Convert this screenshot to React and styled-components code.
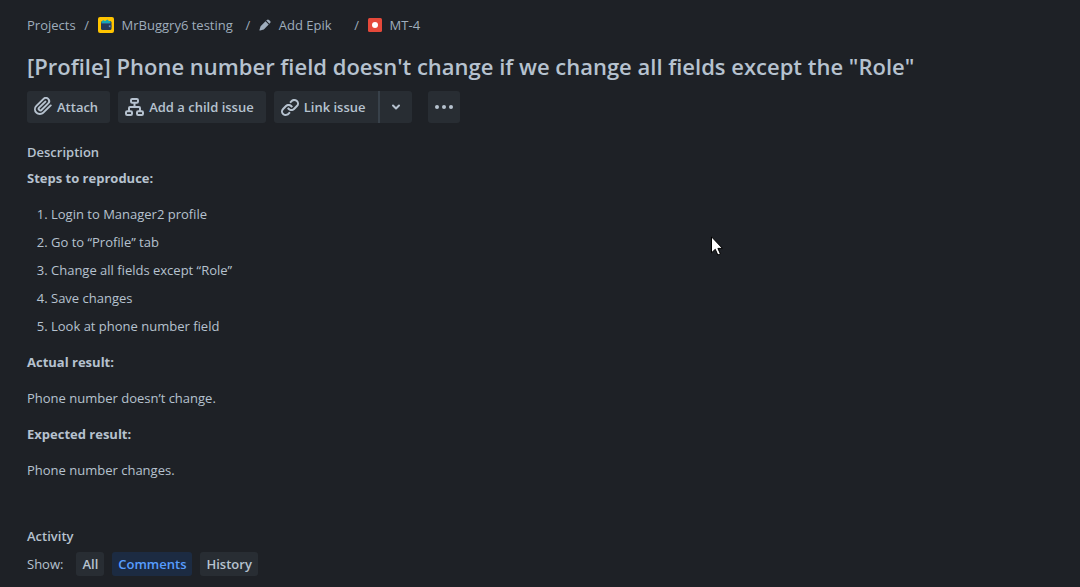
import React, { useState } from "react";
import styled, { createGlobalStyle } from "styled-components";

const GlobalStyle = createGlobalStyle`
  * { box-sizing: border-box; }
  body {
    margin: 0;
    background: #1e2126;
    color: #b6c2cf;
    font-family: "Open Sans", "Noto Sans", sans-serif;
    font-size: 13px;
    line-height: 24px;
  }
`;

const Page = styled.main`
  position: relative;
  padding: 13px 27px 11px;
`;

const Breadcrumbs = styled.ol`
  display: flex;
  align-items: center;
  margin: 0;
  padding: 0;
  list-style: none;
  color: #9fadbc;
`;

const Crumb = styled.li`
  display: flex;
  align-items: center;

  &:not(:first-child)::before {
    content: "/";
    width: 22px;
    margin-left: ${(p) => p.$lead || 0}px;
    text-align: center;
  }
`;

const CrumbLink = styled.a`
  display: flex;
  align-items: center;
  gap: 8px;
  color: inherit;
  text-decoration: none;
`;

const Title = styled.h1`
  margin: 13px 0 9px;
  font-size: 22px;
  font-weight: 600;
  line-height: 32px;
`;

const Toolbar = styled.div`
  display: flex;
  gap: 8px;
`;

const ToolButton = styled.button`
  display: flex;
  align-items: center;
  justify-content: center;
  gap: 5px;
  height: 32px;
  padding: 0 ${(p) => (p.$square ? 0 : 12)}px 0 ${(p) => (p.$square ? 0 : 7)}px;
  min-width: 32px;
  border: 0;
  border-radius: 3px;
  background: #282d33;
  color: #b6c2cf;
  font: inherit;
  font-weight: 600;
  cursor: pointer;
`;

const SplitButton = styled.div`
  display: flex;
  margin-right: 8px;

  & > :first-child { border-radius: 3px 0 0 3px; }
  & > :last-child {
    width: 34px;
    border-left: 2px solid #38414a;
    border-radius: 0 3px 3px 0;
  }
`;

const SectionTitle = styled.h2`
  margin: 0;
  font-size: 13px;
  font-weight: 600;
  line-height: 24px;
`;

const Description = styled.section`
  margin-top: 17px;
`;

const Paragraph = styled.p`
  margin: 12px 0 0;

  ${SectionTitle} + & { margin-top: 2px; }
`;

const Steps = styled.ol`
  display: grid;
  gap: 4px;
  margin: 12px 0 0;
  padding-left: 24px;
`;

const Activity = styled.section`
  margin-top: 42px;
`;

const Filters = styled.div`
  display: flex;
  align-items: center;
  gap: 8px;
  margin-top: 4px;
`;

const FilterLabel = styled.span`
  margin-right: 5px;
`;

const FilterButton = styled.button`
  height: 24px;
  padding: 0 6px;
  border: 0;
  border-radius: 3px;
  background: ${(p) => (p.$active ? "#1c2b42" : "#282d33")};
  color: ${(p) => (p.$active ? "#579dff" : "#b6c2cf")};
  font: inherit;
  font-weight: 600;
  cursor: pointer;
`;

const Pointer = styled.svg`
  position: absolute;
  left: 711px;
  top: 236px;
  pointer-events: none;
`;

const ProjectAvatar = () => (
  <svg width="16" height="16" viewBox="0 0 16 16" aria-hidden="true">
    <rect width="16" height="16" rx="2" fill="#ffc400" />
    <rect x="3" y="4" width="10.5" height="9" rx="1.5" fill="#253858" />
    <path d="M3.5 5 5 3l2 1 2.5-1.5L11 4l1.500.3V6h-9z" fill="#14a8b8" />
    <path d="M3.500 6.500h9" stroke="#2f5c86" />
    <rect x="10.5" y="8" width="3" height="2.5" rx="1" fill="#344f7d" />
    <circle cx="11.7" cy="9.2" r=".6" fill="#8fb7df" />
  </svg>
);

const PencilIcon = () => (
  <svg width="12" height="12" viewBox="0 0 12 12" fill="currentColor" aria-hidden="true">
    <path d="M7.900.9a1.500 1.500 0 0 1 2.100 0l1.100 1.100a1.500 1.500 0 0 1 0 2.100l-.7.700-3.200-3.200zM6.500 2.300l3.200 3.200-4.900 4.900-3.600 1.100a.5.5 0 0 1-.7-.7l1.100-3.600z" />
  </svg>
);

const BugIcon = () => (
  <svg width="14" height="14" viewBox="0 0 14 14" aria-hidden="true">
    <rect width="14" height="14" rx="1.5" fill="#e5493a" />
    <circle cx="7" cy="7" r="3" fill="#fff" />
  </svg>
);

const AttachIcon = () => (
  <svg width="18" height="20" viewBox="3 3 18 20" fill="currentColor" aria-hidden="true">
    <path d="M11.643 17.965c-1.530 1.495-4.016 1.496-5.542.004a3.773 3.773 0 0 1 .002-5.412l7.147-6.985a2.316 2.316 0 0 1 3.233-.003c.893.873.895 2.282.004 3.153l-6.703 6.550a.653.653 0 0 1-.914-.008.620.620 0 0 1 0-.902l6.229-6.087a.941.941 0 0 0 0-1.353.995.995 0 0 0-1.384 0l-6.230 6.087a2.502 2.502 0 0 0 0 3.607 2.643 2.643 0 0 0 3.683.009l6.703-6.551a4.147 4.147 0 0 0-.004-5.858 4.306 4.306 0 0 0-6.001.003l-7.148 6.985a5.655 5.655 0 0 0-.002 8.119c2.291 2.239 6.002 2.238 8.295-.003l7.420-7.252a.941.941 0 0 0 0-1.353.995.995 0 0 0-1.384 0l-7.404 7.250z" />
  </svg>
);

const ChildIcon = () => (
  <svg width="19" height="18" viewBox="0 0 19 18" fill="none" stroke="currentColor" strokeWidth="2" aria-hidden="true">
    <rect x="6" y="1" width="7" height="3.8" rx="1.2" />
    <rect x="1" y="13.2" width="6" height="3.8" rx="1.2" />
    <rect x="12" y="13.2" width="6" height="3.8" rx="1.2" />
    <path d="M9.5 5v4M4 13v-3a1 1 0 0 1 1-1h9a1 1 0 0 1 1 1v3" />
  </svg>
);

const LinkIcon = () => (
  <svg width="18" height="19" viewBox="3 3 18 19" fill="currentColor" aria-hidden="true">
    <path d="M12.856 5.457l-.937.920a1.002 1.002 0 0 0 0 1.437 1.047 1.047 0 0 0 1.463 0l.984-.966c.967-.950 2.542-1.135 3.602-.288a2.540 2.540 0 0 1 .203 3.810l-2.903 2.852a2.646 2.646 0 0 1-3.696 0l-1.110-1.090L9 13.570l1.108 1.089c1.822 1.788 4.802 1.788 6.622 0l2.905-2.852a4.558 4.558 0 0 0-.357-6.820c-1.893-1.517-4.695-1.226-6.422.470" />
    <path d="M11.144 19.543l.937-.920a1.002 1.002 0 0 0 0-1.437 1.047 1.047 0 0 0-1.462 0l-.985.966c-.967.950-2.542 1.135-3.602.288a2.540 2.540 0 0 1-.203-3.810l2.903-2.852a2.646 2.646 0 0 1 3.696 0l1.110 1.090L15 11.430l-1.108-1.089c-1.822-1.788-4.802-1.788-6.622 0l-2.905 2.852a4.558 4.558 0 0 0 .357 6.820c1.893 1.517 4.695 1.226 6.422-.470" />
  </svg>
);

const ChevronIcon = () => (
  <svg width="10" height="8" viewBox="0 0 10 8" fill="none" stroke="currentColor" strokeWidth="2" strokeLinecap="round" strokeLinejoin="round" aria-hidden="true">
    <path d="m2 2.500 3 3 3-3" />
  </svg>
);

const MoreIcon = () => (
  <svg width="18" height="4" viewBox="0 0 18 4" fill="currentColor" aria-hidden="true">
    <circle cx="2" cy="2" r="2" />
    <circle cx="9" cy="2" r="2" />
    <circle cx="16" cy="2" r="2" />
  </svg>
);

const steps = [
  "Login to Manager2 profile",
  "Go to “Profile” tab",
  "Change all fields except “Role”",
  "Save changes",
  "Look at phone number field",
];

export default function App() {
  const [filter, setFilter] = useState("Comments");
  return (
    <Page>
      <GlobalStyle />
      <nav aria-label="Breadcrumbs">
        <Breadcrumbs>
          <Crumb><CrumbLink href="#projects">Projects</CrumbLink></Crumb>
          <Crumb><CrumbLink href="#project"><ProjectAvatar />MrBuggry6 testing</CrumbLink></Crumb>
          <Crumb $lead={4}><CrumbLink href="#epic"><PencilIcon />Add Epik</CrumbLink></Crumb>
          <Crumb $lead={14}><CrumbLink href="#issue"><BugIcon />MT-4</CrumbLink></Crumb>
        </Breadcrumbs>
      </nav>
      <Title>[Profile] Phone number field doesn't change if we change all fields except the "Role"</Title>
      <Toolbar>
        <ToolButton><AttachIcon />Attach</ToolButton>
        <ToolButton><ChildIcon />Add a child issue</ToolButton>
        <SplitButton>
          <ToolButton><LinkIcon />Link issue</ToolButton>
          <ToolButton $square aria-label="More link options"><ChevronIcon /></ToolButton>
        </SplitButton>
        <ToolButton $square aria-label="More actions"><MoreIcon /></ToolButton>
      </Toolbar>
      <Description>
        <SectionTitle>Description</SectionTitle>
        <Paragraph><strong>Steps to reproduce:</strong></Paragraph>
        <Steps>
          {steps.map((s) => <li key={s}>{s}</li>)}
        </Steps>
        <Paragraph><strong>Actual result:</strong></Paragraph>
        <Paragraph>Phone number doesn’t change.</Paragraph>
        <Paragraph><strong>Expected result:</strong></Paragraph>
        <Paragraph>Phone number changes.</Paragraph>
      </Description>
      <Activity>
        <SectionTitle>Activity</SectionTitle>
        <Filters>
          <FilterLabel>Show:</FilterLabel>
          {["All", "Comments", "History"].map((name) => (
            <FilterButton key={name} $active={filter === name} aria-pressed={filter === name} onClick={() => setFilter(name)}>
              {name}
            </FilterButton>
          ))}
        </Filters>
      </Activity>
      <Pointer width="12" height="20" viewBox="0 0 12 20" aria-hidden="true">
        <path d="M.5.8v16l3.800-3.500 2.500 5.700 2.600-1.100-2.500-5.500h4.600z" fill="#fff" stroke="#000" />
      </Pointer>
    </Page>
  );
}
